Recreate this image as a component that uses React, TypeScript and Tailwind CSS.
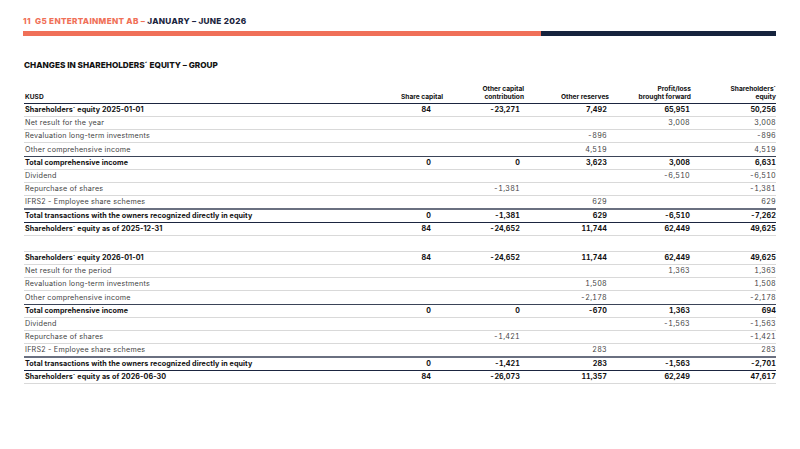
import React from "react";

type Row = {
  label: string;
  values: string[];
  bold?: boolean;
  line: "light" | "dark" | "thick" | "navy";
  tall?: boolean;
};

const LINE = {
  light: "border-b border-[#d9d9d9]",
  dark: "border-b-[1.5px] border-[#3b4458]",
  thick: "border-b-2 border-[#6a7080]",
  navy: "border-b-[1.5px] border-[#1b2540]",
};

// right padding per column, to match the value offsets in the report
const PAD = ["pr-[12px]", "pr-[4px]", "pr-[2px]", "pr-[1px]", "pr-0"];

const firstHalf: Row[] = [
  { label: "Shareholders´ equity 2025-01-01", values: ["84", "-23,271", "7,492", "65,951", "50,256"], bold: true, line: "light" },
  { label: "Net result for the year", values: ["", "", "", "3,008", "3,008"], line: "light" },
  { label: "Revaluation long-term investments", values: ["", "", "-896", "", "-896"], line: "light" },
  { label: "Other comprehensive income", values: ["", "", "4,519", "", "4,519"], line: "dark", tall: true },
  { label: "Total comprehensive income", values: ["0", "0", "3,623", "3,008", "6,631"], bold: true, line: "light" },
  { label: "Dividend", values: ["", "", "", "-6,510", "-6,510"], line: "light" },
  { label: "Repurchase of shares", values: ["", "-1,381", "", "", "-1,381"], line: "light" },
  { label: "IFRS2 - Employee share schemes", values: ["", "", "629", "", "629"], line: "thick", tall: true },
  { label: "Total transactions with the owners recognized directly in equity", values: ["0", "-1,381", "629", "-6,510", "-7,262"], bold: true, line: "navy" },
  { label: "Shareholders´ equity as of 2025-12-31", values: ["84", "-24,652", "11,744", "62,449", "49,625"], bold: true, line: "light" },
];

const secondHalf: Row[] = [
  { label: "Shareholders´ equity 2026-01-01", values: ["84", "-24,652", "11,744", "62,449", "49,625"], bold: true, line: "light" },
  { label: "Net result for the period", values: ["", "", "", "1,363", "1,363"], line: "light" },
  { label: "Revaluation long-term investments", values: ["", "", "1,508", "", "1,508"], line: "light" },
  { label: "Other comprehensive income", values: ["", "", "-2,178", "", "-2,178"], line: "dark", tall: true },
  { label: "Total comprehensive income", values: ["0", "0", "-670", "1,363", "694"], bold: true, line: "light" },
  { label: "Dividend", values: ["", "", "", "-1,563", "-1,563"], line: "light" },
  { label: "Repurchase of shares", values: ["", "-1,421", "", "", "-1,421"], line: "light" },
  { label: "IFRS2 - Employee share schemes", values: ["", "", "283", "", "283"], line: "thick", tall: true },
  { label: "Total transactions with the owners recognized directly in equity", values: ["0", "-1,421", "283", "-1,563", "-2,701"], bold: true, line: "navy" },
  { label: "Shareholders´ equity as of 2026-06-30", values: ["84", "-26,073", "11,357", "62,249", "47,617"], bold: true, line: "light" },
];

const GRID = "grid grid-cols-[339px_80px_81px_85px_82px_85px]";

function TableRow({ row }: { row: Row }) {
  return (
    <div
      className={`${GRID} items-center ${row.tall ? "h-[14px]" : "h-[13px]"} ${LINE[row.line]} ${
        row.bold
          ? "font-bold text-[#111] tracking-[0.01em]"
          : "font-normal text-[#444] tracking-[0.03em]"
      }`}
    >
      <div className="pl-px whitespace-nowrap">{row.label}</div>
      {row.values.map((v, i) => (
        <div key={i} className={`text-right tabular-nums ${PAD[i]}`}>
          {v}
        </div>
      ))}
    </div>
  );
}

export default function App() {
  return (
    <div className="w-[800px] h-[449px] bg-white font-['Inter',sans-serif] overflow-hidden">
      {/* page header */}
      <div className="px-[23px] pt-[16px]">
        <div className="text-[8.2px] font-extrabold tracking-[0.035em] leading-[10px] whitespace-nowrap">
          <span className="text-[#f07058]">11&nbsp;&nbsp;G5 ENTERTAINMENT AB – </span>
          <span className="text-[#1b2540]">JANUARY – JUNE 2026</span>
        </div>
        <div className="mt-[5px] flex h-[5px] w-[753px]">
          <div className="w-[518px] bg-[#f07058]" />
          <div className="flex-1 bg-[#16233d]" />
        </div>
      </div>

      <div className="px-[24px]">
        <h1 className="mt-[24px] text-[8.2px] font-extrabold leading-[10px] text-[#111]">
          CHANGES IN SHAREHOLDERS´ EQUITY – GROUP
        </h1>

        <div className="mt-[15px] w-[752px] text-[7.2px] leading-[8px]">
          {/* column headings */}
          <div
            className={`${GRID} items-end pb-[2px] border-b-[1.5px] border-[#1b2540] font-bold text-[6.6px] text-[#111]`}
          >
            <div className="pl-px">KUSD</div>
            <div className="text-right">Share capital</div>
            <div className="text-right">
              Other capital
              <br />
              contribution
            </div>
            <div className="text-right">Other reserves</div>
            <div className="text-right">
              Profit/loss
              <br />
              brought forward
            </div>
            <div className="text-right">
              Shareholders´
              <br />
              equity
            </div>
          </div>

          {firstHalf.map((r, i) => (
            <TableRow key={i} row={r} />
          ))}

          <div className="h-[16px] border-b border-[#d9d9d9]" />

          {secondHalf.map((r, i) => (
            <TableRow key={i} row={r} />
          ))}
        </div>
      </div>
    </div>
  );
}
